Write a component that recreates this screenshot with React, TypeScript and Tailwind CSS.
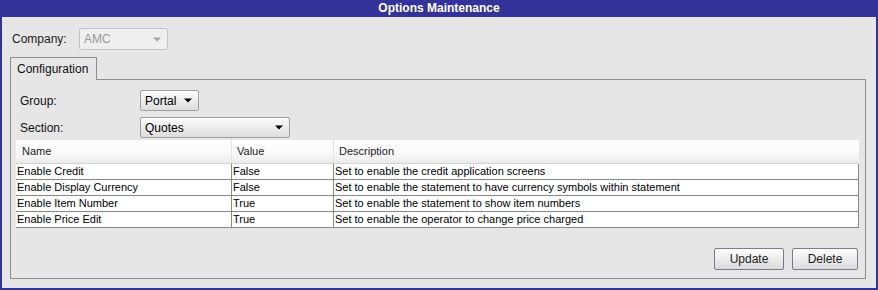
import React from "react";

const font = { fontFamily: '"Liberation Sans", Arial, sans-serif' };

function Arrow({ color = "#000" }: { color?: string }) {
  return (
    <svg width="8" height="5" viewBox="0 0 8 5" className="shrink-0">
      <path d="M0 0.5 L8 0.5 L4 4.5 Z" fill={color} />
    </svg>
  );
}

const rows = [
  ["Enable Credit", "False", "Set to enable the credit application screens"],
  ["Enable Display Currency", "False", "Set to enable the statement to have currency symbols within statement"],
  ["Enable Item Number", "True", "Set to enable the statement to show item numbers"],
  ["Enable Price Edit", "True", "Set to enable the operator to change price charged"],
];

export default function App() {
  return (
    <div
      className="w-[878px] h-[290px] bg-[#333399] flex flex-col px-[2px] pb-[2px] text-black"
      style={font}
    >
      <div className="h-[17px] shrink-0 flex items-center justify-center text-white font-bold text-[12px] leading-none pb-[1px]">
        Options Maintenance
      </div>
      <div className="flex-1 bg-[#e6e6e6] border-t border-[#f2f2f2] flex flex-col pl-[8px] pr-[10px]">
        {/* Company row */}
        <div className="flex items-center h-[22px] mt-[10px] pl-[2px]">
          <span className="text-[12px] w-[67px] text-[#222]">Company:</span>
          <div className="w-[89px] h-[22px] border border-[#c4c4c4] bg-[#efefef] flex items-center justify-between pl-[4px] pr-[6px] rounded-[2px]">
            <span className="text-[12px] text-[#9a9a9a]">AMC</span>
            <Arrow color="#a8a8a8" />
          </div>
        </div>
        {/* Tab */}
        <div className="mt-[7px] flex">
          <div className="w-[87px] h-[23px] border border-b-0 border-[#8e8e8e] bg-[#e6e6e6] pl-[6px] flex items-center text-[12px] text-[#111] relative -mb-px z-10">
            Configuration
          </div>
        </div>
        {/* Panel */}
        <div className="w-[856px] h-[200px] border border-[#8e8e8e] flex flex-col">
          <div className="flex items-center h-[21px] mt-[10px] pl-[9px]">
            <span className="text-[12px] w-[120px] text-[#111]">Group:</span>
            <div className="w-[59px] h-[21px] border border-[#a0a0a0] rounded-[2px] bg-gradient-to-b from-[#fbfbfb] to-[#dedede] flex items-center justify-between pl-[4px] pr-[6px]">
              <span className="text-[12px]">Portal</span>
              <Arrow />
            </div>
          </div>
          <div className="flex items-center h-[21px] mt-[6px] pl-[9px]">
            <span className="text-[12px] w-[120px] text-[#111]">Section:</span>
            <div className="w-[150px] h-[21px] border border-[#a0a0a0] rounded-[2px] bg-gradient-to-b from-[#fbfbfb] to-[#dedede] flex items-center justify-between pl-[4px] pr-[6px]">
              <span className="text-[12px]">Quotes</span>
              <Arrow />
            </div>
          </div>
          {/* Table */}
          <div className="ml-[5px] mt-[2px] w-[843px] text-[11px]">
            <div className="grid grid-cols-[216px_102px_1fr] h-[24px] bg-gradient-to-b from-[#ffffff] via-[#fbfbfb] to-[#ebebeb] border-b border-[#d4d4d4]">
              <div className="flex items-center pl-[6px] border-r border-[#e2e2e2] text-[#222]">Name</div>
              <div className="flex items-center pl-[5px] border-r border-[#e2e2e2] text-[#222]">Value</div>
              <div className="flex items-center pl-[5px] text-[#222]">Description</div>
            </div>
            {rows.map((r, i) => (
              <div
                key={i}
                className="grid grid-cols-[216px_102px_1fr] h-[16px] bg-white border-b border-r border-[#8a8a8a]"
              >
                <div className="flex items-center pl-[1px] border-r border-[#8a8a8a] leading-none">{r[0]}</div>
                <div className="flex items-center pl-[1px] border-r border-[#8a8a8a] leading-none">{r[1]}</div>
                <div className="flex items-center pl-[1px] leading-none">{r[2]}</div>
              </div>
            ))}
          </div>
          <div className="flex-1" />
          <div className="flex justify-end gap-[8px] pr-[7px] mb-[8px]">
            <button className="w-[70px] h-[22px] border border-[#7a7a8c] rounded-[2px] bg-gradient-to-b from-[#ffffff] to-[#dadada] text-[12px] text-[#222]">
              Update
            </button>
            <button className="w-[66px] h-[22px] border border-[#7a7a8c] rounded-[2px] bg-gradient-to-b from-[#ffffff] to-[#dadada] text-[12px] text-[#222]">
              Delete
            </button>
          </div>
        </div>
      </div>
    </div>
  );
}
